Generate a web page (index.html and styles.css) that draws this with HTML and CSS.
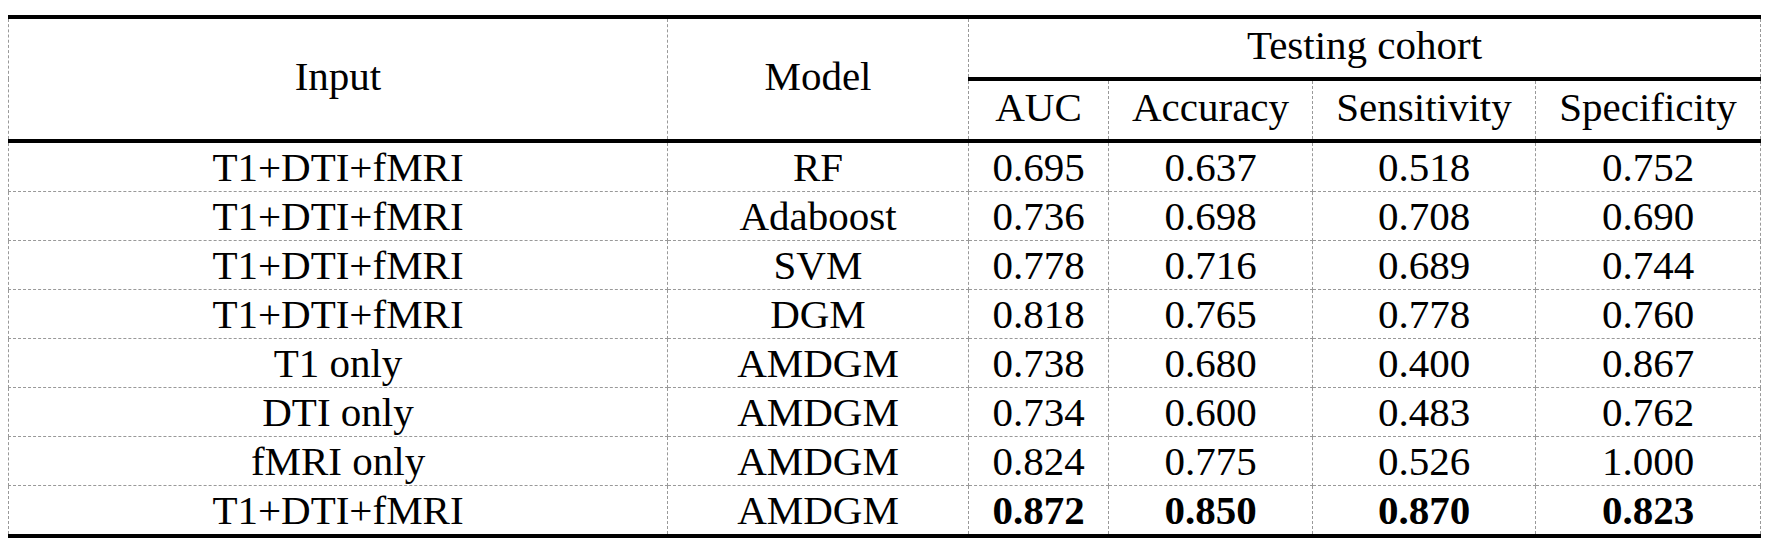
FILE: index.html
```html
<!DOCTYPE html>
<html lang="en">
<head>
    <meta charset="UTF-8">
    <title>Results</title>
    <link rel="stylesheet" href="styles.css">
</head>
<body>
    <table class="results">
        <colgroup>
            <col class="c-input">
            <col class="c-model">
            <col class="c-auc">
            <col class="c-acc">
            <col class="c-sens">
            <col class="c-spec">
        </colgroup>
        <thead>
            <tr class="head-top">
                <td rowspan="2" class="hd">Input</td>
                <td rowspan="2" class="hd">Model</td>
                <td colspan="4" class="hd group">Testing cohort</td>
            </tr>
            <tr class="head-sub">
                <td class="hd">AUC</td>
                <td class="hd">Accuracy</td>
                <td class="hd">Sensitivity</td>
                <td class="hd">Specificity</td>
            </tr>
        </thead>
        <tbody>
            <tr><td>T1+DTI+fMRI</td><td>RF</td><td>0.695</td><td>0.637</td><td>0.518</td><td>0.752</td></tr>
            <tr><td>T1+DTI+fMRI</td><td>Adaboost</td><td>0.736</td><td>0.698</td><td>0.708</td><td>0.690</td></tr>
            <tr><td>T1+DTI+fMRI</td><td>SVM</td><td>0.778</td><td>0.716</td><td>0.689</td><td>0.744</td></tr>
            <tr><td>T1+DTI+fMRI</td><td>DGM</td><td>0.818</td><td>0.765</td><td>0.778</td><td>0.760</td></tr>
            <tr><td>T1 only</td><td>AMDGM</td><td>0.738</td><td>0.680</td><td>0.400</td><td>0.867</td></tr>
            <tr><td>DTI only</td><td>AMDGM</td><td>0.734</td><td>0.600</td><td>0.483</td><td>0.762</td></tr>
            <tr><td>fMRI only</td><td>AMDGM</td><td>0.824</td><td>0.775</td><td>0.526</td><td>1.000</td></tr>
            <tr><td>T1+DTI+fMRI</td><td>AMDGM</td><td class="b">0.872</td><td class="b">0.850</td><td class="b">0.870</td><td class="b">0.823</td></tr>
        </tbody>
    </table>
</body>
</html>
```

FILE: styles.css
```css
body{
    margin:0;
    padding:15px 0 0 8px;
    background:#fff;
    font-size:41px;
}
.results{
    border-collapse: collapse;
    table-layout: fixed;
    width:1752px;
}
.c-input{ width:659px; }
.c-model{ width:301px; }
.c-auc{ width:140px; }
.c-acc{ width:204px; }
.c-sens{ width:223px; }
.c-spec{ width:225px; }

.results td{
    font-family: "Liberation Serif", serif;
    padding:0;
    border:1px dashed #999;
    text-align:center;
    vertical-align: middle;
    height:48px;
}
.results .hd{
    height:52px;
    padding-bottom:6px;
}
.head-top td{
    border-top:4px solid #000;
}
.results thead td{
    border-bottom:4px solid #000;
}
.results tbody tr:last-child td{
    border-bottom:4px solid #000;
}
.results .b{
    font-weight: bold;
}
```
